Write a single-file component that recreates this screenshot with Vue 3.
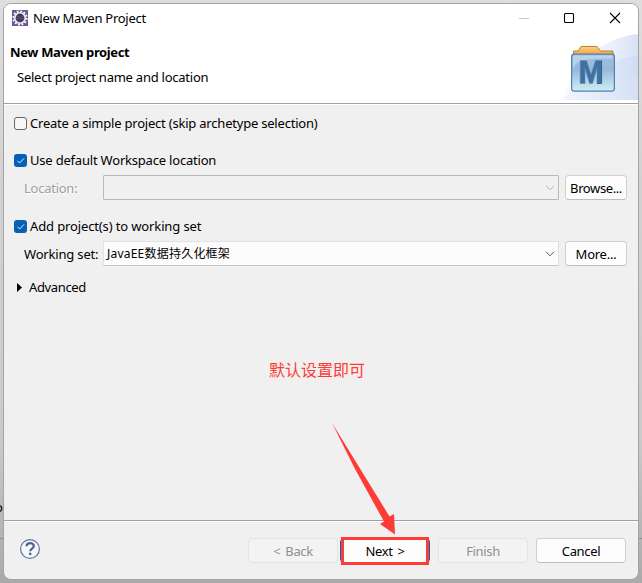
<script setup>
</script>

<template>
  <div class="desktop">
    <span class="behind-char">o</span>
    <i class="behind-line"></i>
    <section class="dialog">
      <header class="head">
        <div class="titlebar">
          <svg class="app-icon" width="16" height="16" viewBox="0 0 16 16">
            <rect width="16" height="16" fill="#6b5796" />
            <circle cx="8" cy="8" r="6.700" fill="none" stroke="#fff" stroke-width="1.800" stroke-dasharray="1.900 1.608" />
            <circle cx="8" cy="8" r="5.200" fill="#413a58" stroke="#f1eef5" stroke-width="1.600" />
            <path d="M4 6.800h8M4 8.600h8" stroke="#5f5678" stroke-width=".8" />
          </svg>
          <span class="title">New Maven Project</span>
          <svg class="controls" width="106" height="14" viewBox="0 0 106 14">
            <path d="M1 7.5h10" stroke="#c9c9c9" />
            <rect x="46.5" y="2.5" width="9" height="9" rx="1" fill="none" stroke="#000" stroke-width="1.1" />
            <path d="M92 2l10 10M102 2l-10 10" stroke="#000" stroke-width="1.1" />
          </svg>
        </div>
        <div class="heading">New Maven project</div>
        <div class="sub">Select project name and location</div>
        <svg class="banner" width="75" height="66" viewBox="0 0 75 66">
          <defs>
            <linearGradient id="sky" x1="0" y1="0" x2="1" y2="0">
              <stop offset="0" stop-color="#fafcff" />
              <stop offset=".6" stop-color="#edf2fc" />
              <stop offset="1" stop-color="#d8e2f6" />
            </linearGradient>
            <linearGradient id="glow" x1="0" y1="0" x2="1" y2="0">
              <stop offset="0" stop-color="#e8effb" />
              <stop offset="1" stop-color="#c9d7f3" />
            </linearGradient>
            <linearGradient id="face" x1="0" y1="0" x2="0" y2="1">
              <stop offset="0" stop-color="#a3c0e0" />
              <stop offset=".4" stop-color="#94b9dc" />
              <stop offset="1" stop-color="#cfedf3" />
            </linearGradient>
            <linearGradient id="tab" x1="0" y1="0" x2="0" y2="1">
              <stop offset="0" stop-color="#ffce7c" />
              <stop offset="1" stop-color="#f0a945" />
            </linearGradient>
          </defs>
          <path d="M0 66C4 35 37 3 75 0v66z" fill="url(#sky)" />
          <path d="M0 66C15 46 47 25 75 21v22C56 46 47 53 36 66z" fill="url(#glow)" opacity=".5" />
          <path d="M36 66c10-13 21-20 39-22v22z" fill="#cfdcf5" opacity=".4" />
          <path d="M10.500 20.500v-3.500h4.500l3-4.500h16l3.500 4.500h12.500v3.500z" fill="url(#tab)" stroke="#b98432" />
          <rect x="8.600" y="20.100" width="42.800" height="37" rx="2.500" fill="url(#face)" stroke="#4f80b0" stroke-width="1.200" />
          <path d="M10 32V22.500q0-1 1-1h38.500v3C27 24.500 12 24.500 10 36z" fill="#dcecf8" opacity=".45" />
          <path d="M17.200 49.500V26.500h6.300l4.500 14 4.500-14h6v23H34V34l-4.500 15.500h-3L22 34v15.500z" fill="#3f709f" stroke="#5b8db8" stroke-width=".6" />
          <path d="M38.600 26.500v23H34" fill="none" stroke="#2c5279" stroke-width=".8" />
        </svg>
      </header>

      <main class="body">
        <label class="check c1"><i class="box"></i><span class="t-simple">Create a simple project (skip archetype selection)</span></label>
        <label class="check c2">
          <i class="box on"><svg width="13" height="13" viewBox="0 0 13 13"><path d="M3.500 6.800l2.200 2.200 4.300-4.600" fill="none" stroke="#fff" stroke-width=".9" /></svg></i>
          <span class="t-default">Use default Workspace location</span>
        </label>
        <div class="row r1">
          <span class="lab muted t-loc">Location:</span>
          <div class="combo disabled"><svg width="10" height="6" viewBox="0 0 10 6"><path d="M1 .8l4 4 4-4" fill="none" stroke="#b5b5b5" /></svg></div>
          <button class="btn side"><span class="t-browse">Browse...</span></button>
        </div>
        <label class="check c3">
          <i class="box on"><svg width="13" height="13" viewBox="0 0 13 13"><path d="M3.500 6.800l2.200 2.200 4.300-4.600" fill="none" stroke="#fff" stroke-width=".9" /></svg></i>
          <span class="t-add">Add project(s) to working set</span>
        </label>
        <div class="row r2">
          <span class="lab t-ws">Working set:</span>
          <div class="combo"><span class="value">JavaEE数据持久化框架</span><svg width="10" height="6" viewBox="0 0 10 6"><path d="M1 .8l4 4 4-4" fill="none" stroke="#555" /></svg></div>
          <button class="btn side"><span class="t-more">More...</span></button>
        </div>
        <div class="advanced">
          <svg width="5" height="9" viewBox="0 0 5 9"><path d="M0 0l5 4.500L0 9z" /></svg>
          <span class="t-adv">Advanced</span>
        </div>
      </main>

      <footer class="foot">
        <svg class="help" width="22" height="22" viewBox="0 0 22 22">
          <circle cx="11" cy="11" r="9.400" fill="#f5f7fa" stroke="#60759b" stroke-width="1.200" />
          <path d="M7.500 8.300c.2-4.200 7.300-4.100 7.300-.3 0 2.500-3.600 2.600-3.600 5.300" fill="none" stroke="#4d648e" stroke-width="2.200" />
          <rect x="10" y="14.700" width="2.400" height="2.300" fill="#4d648e" />
        </svg>
        <button class="btn off back">&lt; Back</button>
        <button class="btn next">Next &gt;</button>
        <button class="btn off finish">Finish</button>
        <button class="btn cancel">Cancel</button>
      </footer>
    </section>

    <div class="note">默认设置即可</div>
    <svg class="arrow" width="66" height="113" viewBox="0 0 66 113">
      <path d="M0 0L57.500 93.500l4.500-2.500 1 20.500L48 101l4-2.500L23 46z" fill="#ff3b36" />
    </svg>
    <div class="mark"></div>
  </div>
</template>

<style>
body { margin: 0; overflow: hidden; }
</style>

<style scoped>
* { box-sizing: border-box; }
.desktop {
  position: relative;
  width: 642px;
  height: 583px;
  padding: 3px;
  background: linear-gradient(180deg, #dedede 0, #d2d2d2 30%, #cacaca 75%, #aaa 100%);
  font-family: "Noto Sans", "Noto Sans CJK SC", sans-serif;
  font-size: 13px;
  line-height: 18px;
  color: #000;
  white-space: nowrap;
}
.behind-char { position: absolute; left: -5px; top: 498px; }
.behind-line { position: absolute; left: 0; right: 0; top: 538px; height: 1px; background: #8e8e8e; }
.dialog {
  position: relative;
  display: flex;
  flex-direction: column;
  width: 636px;
  height: 577px;
  border: 1px solid #a4a4a4;
  border-radius: 8px;
  overflow: hidden;
  background: #f0f0f0;
}
.head { position: relative; height: 100px; background: #fff; border-bottom: 1px solid #a0a0a0; flex: none; }
.titlebar { display: flex; align-items: center; height: 28px; padding-left: 8px; }
.title { margin-left: 5px; letter-spacing: -.27px; }
.controls { margin-left: auto; margin-right: 14px; }
.heading { padding-left: 6px; margin-top: 11px; font-weight: 700; letter-spacing: -.36px; }
.sub { padding-left: 13px; margin-top: 7px; letter-spacing: -.24px; }
.banner { position: absolute; right: 0; bottom: 3px; }
.body { height: 416px; border-top: 1px solid #fff; padding: 8px 11px 0 10px; flex: none; }
.check { display: flex; align-items: center; height: 20px; }
.box { width: 13px; height: 13px; border: 1px solid #666; border-radius: 3px; background: #f6f6f6; margin-right: 3px; flex: none; }
.box.on { background: #0560b6; border: 0; }
.box svg { display: block; }
.t-simple { letter-spacing: -.21px; }
.t-default { letter-spacing: -.2px; }
.t-loc { letter-spacing: -.25px; }
.t-add { letter-spacing: -.13px; }
.t-ws { letter-spacing: -.18px; }
.t-adv { letter-spacing: -.35px; }
.t-browse { letter-spacing: -.4px; }
.t-more { letter-spacing: -.25px; }
.c2 { margin-top: 17px; }
.row { display: flex; height: 25px; align-items: center; }
.r1 { margin-top: 5px; }
.r2 { margin-top: 5px; }
.c3 { margin-top: 16px; }
.lab { width: 79px; margin-left: 10px; flex: none; }
.muted { color: #a0a0a0; text-shadow: 1px 1px #fff; }
.combo {
  display: flex;
  align-items: center;
  width: 456px;
  height: 25px;
  border: 1px solid #e2e2e2;
  border-bottom-color: #c5c5c5;
  background: #fcfcfc;
  border-radius: 1px;
  padding: 0 3px;
}
.combo svg { margin-left: auto; }
.combo.disabled { background: #f0f0f0; border-color: #b9b9b9; }
.value { font-size: 12px; letter-spacing: .22px; }
.btn {
  display: flex;
  align-items: center;
  justify-content: center;
  height: 25px;
  padding: 0;
  font: inherit;
  color: #000;
  border: 1px solid #d0d0d0;
  border-bottom-color: #bdbdbd;
  border-radius: 4px;
  background: #fdfdfd;
  flex: none;
}
.side { width: 62px; margin-left: 6px; }
.advanced { display: flex; align-items: center; height: 20px; margin-top: 11px; padding-left: 3px; }
.advanced span { margin-left: 7px; }
.foot {
  display: flex;
  flex: 1;
  border-top: 1px solid #a0a0a0;
  box-shadow: inset 0 1px #fff;
  padding: 17px 11px 0 15px;
}
.help { margin-right: 207px; }
.foot .btn { width: 90px; letter-spacing: -.35px; word-spacing: 2px; }
.foot .off { color: #909090; background: #f3f3f3; border-color: #e3e3e3; }
.foot .next { margin-left: 2px; border-color: #0067c0; }
.foot .finish { margin-left: 8px; }
.foot .cancel { margin-left: 8px; }
.note { position: absolute; left: 269px; top: 358px; font-size: 16px; line-height: 24px; color: #ff3b36; }
.arrow { position: absolute; left: 332px; top: 423px; }
.mark { position: absolute; left: 341px; top: 537px; width: 88px; height: 28px; border: 3px solid #ff3b36; }
</style>
